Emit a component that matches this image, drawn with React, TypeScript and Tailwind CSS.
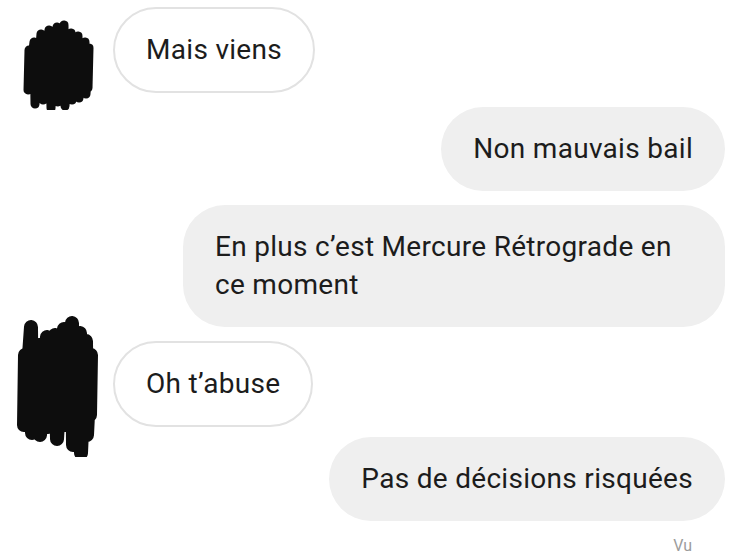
import React from "react";

const font = { fontFamily: "Roboto, 'Noto Sans', sans-serif" };

function ScribbleSmall() {
  return (
    <svg
      width="73"
      height="92"
      viewBox="0 0 73 92"
      className="ml-[22px] -my-[34px] translate-y-[14px]"
    >
      <path
        d="M7 32 L6 72 L12 24 L13 86 L19 16 L21 82 L27 12 L29 90 L35 9 L36 84 L42 7 L43 88 L49 15 L50 82 L56 18 L57 80 L63 24 L64 76 L67 30 L66 70"
        fill="none"
        stroke="#0d0d0d"
        strokeWidth="9"
        strokeLinecap="round"
        strokeLinejoin="round"
      />
    </svg>
  );
}

function ScribbleLarge() {
  return (
    <svg
      width="84"
      height="142"
      viewBox="0 0 84 142"
      className="ml-[15px] -my-[28px] translate-y-[2px]"
    >
      <path
        d="M10 40 L9 110 L16 12 L17 118 L24 30 L25 120 L32 22 L33 112 L40 20 L42 124 L49 14 L50 110 L57 8 L58 130 L65 18 L66 138 L71 26 L72 120 L76 40 L75 100"
        fill="none"
        stroke="#0d0d0d"
        strokeWidth="14"
        strokeLinecap="round"
        strokeLinejoin="round"
      />
      <rect x="12" y="40" width="60" height="70" fill="#0d0d0d" />
    </svg>
  );
}

function Incoming({ text, avatar }: { text: string; avatar: React.ReactNode }) {
  return (
    <div className="flex items-center">
      <div className="flex w-[113px] shrink-0 items-center">{avatar}</div>
      <div className="rounded-full border-2 border-[#e2e2e2] bg-white px-[31px] py-[22px] text-[28px] leading-[38px] tracking-[0.3px]">
        {text}
      </div>
    </div>
  );
}

function Outgoing({ text, wide }: { text: string; wide?: boolean }) {
  return (
    <div className="flex justify-end pr-[23px]">
      <div
        className={
          wide
            ? "max-w-[542px] rounded-[42px] bg-[#efefef] px-8 py-[23px] text-[28px] leading-[38px] tracking-[0.3px]"
            : "rounded-full bg-[#efefef] px-8 py-[23px] text-[28px] leading-[38px] tracking-[0.3px]"
        }
      >
        {text}
      </div>
    </div>
  );
}

export default function App() {
  return (
    <div
      className="h-[558px] w-[748px] overflow-hidden bg-white pt-[7px] text-[#1c1c1c]"
      style={font}
    >
      <div className="flex flex-col gap-[14px]">
        <Incoming text="Mais viens" avatar={<ScribbleSmall />} />
        <Outgoing text="Non mauvais bail" />
        <Outgoing text="En plus c’est Mercure Rétrograde en ce moment" wide />
        <Incoming text="Oh t’abuse" avatar={<ScribbleLarge />} />
        <div className="-mt-[4px]">
          <Outgoing text="Pas de décisions risquées" />
        </div>
      </div>
      <div className="flex justify-end pr-[56px] pt-[15px] text-[16px] leading-[20px] text-[#9c9c9c]">
        Vu
      </div>
    </div>
  );
}
